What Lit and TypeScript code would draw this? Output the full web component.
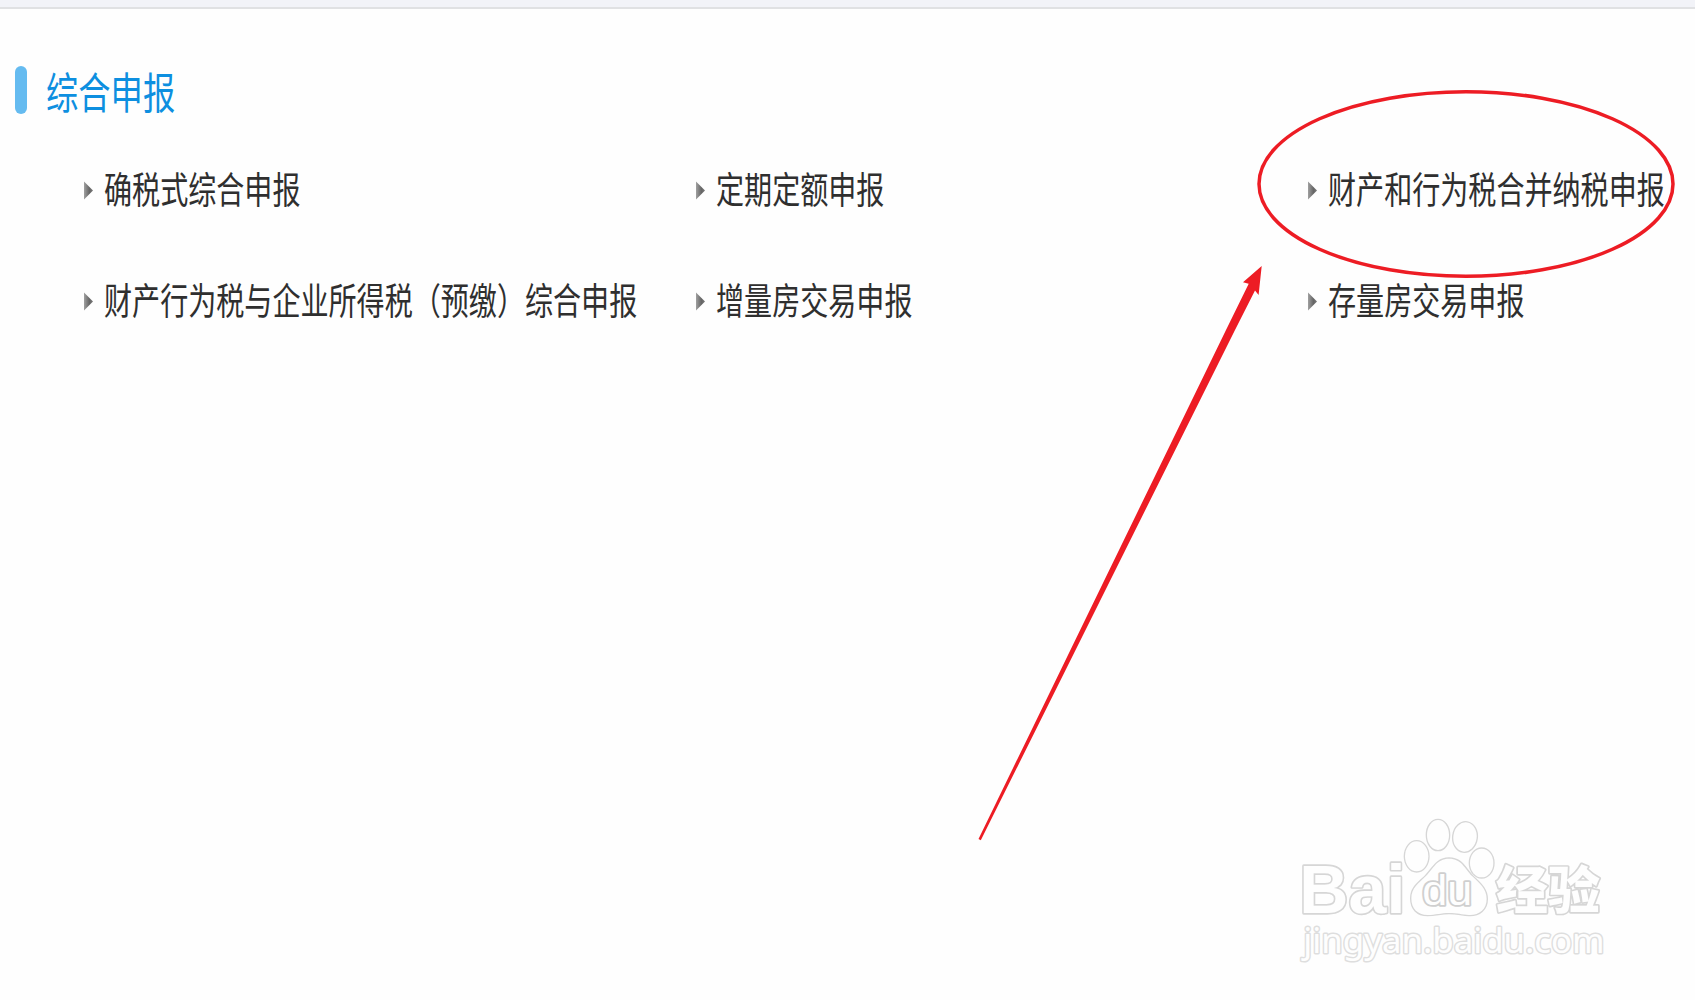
import { LitElement, html, css, svg } from "lit";

interface MenuEntry {
  label: string;
}

const ENTRIES: MenuEntry[] = [
  { label: "确税式综合申报" },
  { label: "定期定额申报" },
  { label: "财产和行为税合并纳税申报" },
  { label: "财产行为税与企业所得税（预缴）综合申报" },
  { label: "增量房交易申报" },
  { label: "存量房交易申报" },
];

export class MenuItem extends LitElement {
  static styles = css`
    :host {
      display: flex;
      align-items: center;
      height: 111px;
      min-width: 0;
    }

    .caret {
      flex: none;
      width: 9px;
      height: 19px;
      margin-right: 11px;
    }

    .label {
      flex: none;
      padding-bottom: 5px;
      font-size: 37px;
      line-height: 56px;
      white-space: nowrap;
      color: #2f2f2f;
      transform: scaleX(0.7585);
      transform-origin: left center;
    }
  `;

  label = "";

  static properties = {
    label: { type: String },
  };

  protected render() {
    return html`
      <svg class="caret" viewBox="0 0 9 19">
        <defs>
          <linearGradient id="shade">
            <stop offset="0" stop-color="#a0a0a0" />
            <stop offset="0.6" stop-color="#666" />
            <stop offset="1" stop-color="#777" />
          </linearGradient>
        </defs>
        <path d="M0 0.5 L9 9.5 L0 18.5 Z" fill="url(#shade)" />
      </svg>
      <span class="label">${this.label}</span>
    `;
  }
}

customElements.define("menu-item", MenuItem);

export class SiteWatermark extends LitElement {
  static styles = css`
    :host {
      display: block;
    }

    svg {
      display: block;
      width: 340px;
      height: 180px;
    }

    .outline {
      fill: #fefefe;
      stroke: #d6d6d6;
      stroke-width: 10px;
      stroke-linejoin: round;
      paint-order: stroke;
    }

    .pad {
      stroke-width: 8px;
    }

    .brand {
      font: bold 208px "Liberation Sans", Arial, sans-serif;
    }

    .inner {
      font: 128px "Liberation Sans", Arial, sans-serif;
      stroke: #cfcfcf;
      stroke-width: 11px;
    }

    .name {
      font: 900 154px "Noto Sans CJK SC", sans-serif;
    }

    .site {
      font: 104px "Noto Sans", "Open Sans", sans-serif;
      stroke: #dedede;
      stroke-width: 9px;
    }
  `;

  private renderPaw() {
    return svg`
      <ellipse class="outline pad" cx="410" cy="169" rx="35" ry="45" />
      <ellipse class="outline pad" cx="474" cy="105" rx="33" ry="45" />
      <ellipse class="outline pad" cx="555" cy="111" rx="35" ry="44" transform="rotate(8 555 111)" />
      <ellipse class="outline pad" cx="605" cy="189" rx="35" ry="43" />
      <path
        class="outline pad"
        d="M507 176 C545 176 553 205 577 229 C598 250 620 266 620 297 C620 328 598 346 567 345 C545 344 532 339 507 339 C482 339 468 345 443 345 C412 345 394 326 394 295 C394 264 416 250 437 229 C461 205 470 176 507 176 Z"
      />
    `;
  }

  protected render() {
    return html`
      <svg viewBox="0 0 1020 540">
        <text class="outline brand" x="58" y="338" textLength="318" lengthAdjust="spacingAndGlyphs">Bai</text>
        ${this.renderPaw()}
        <text class="outline inner" x="427" y="316" textLength="150" lengthAdjust="spacingAndGlyphs">du</text>
        <text class="outline name" x="648" y="326" textLength="312" lengthAdjust="spacingAndGlyphs">经验</text>
        <text class="outline site" x="70" y="460" textLength="904" lengthAdjust="spacingAndGlyphs">jingyan.baidu.com</text>
      </svg>
    `;
  }
}

customElements.define("site-watermark", SiteWatermark);

export class AppRoot extends LitElement {
  static styles = css`
    :host {
      display: block;
      position: relative;
      box-sizing: border-box;
      width: 1695px;
      height: 1000px;
      overflow: hidden;
      background: #fefefe;
      font-family: "Noto Sans CJK SC", sans-serif;
    }

    .top-strip {
      box-sizing: border-box;
      height: 9px;
      background: #f2f3f8;
      border-bottom: 2px solid #e0e1e3;
    }

    .heading {
      display: flex;
      align-items: center;
      height: 48px;
      margin: 57px 0 0 15px;
    }

    .marker {
      width: 12px;
      height: 48px;
      margin-right: 19px;
      border-radius: 6px;
      background: #65bbf0;
    }

    .title {
      margin: 0;
      font-size: 43px;
      font-weight: 400;
      line-height: 60px;
      white-space: nowrap;
      color: #0d8fe0;
      transform: scaleX(0.751);
      transform-origin: left center;
    }

    .menu {
      display: grid;
      grid-template-columns: repeat(3, 612px);
      margin: 21px 0 0 84px;
    }

    .annotation {
      position: absolute;
      inset: 0;
      width: 1695px;
      height: 1000px;
    }

    .watermark {
      position: absolute;
      left: 1280px;
      top: 800px;
    }
  `;

  protected render() {
    return html`
      <div class="top-strip"></div>
      <div class="heading">
        <span class="marker"></span>
        <h2 class="title">综合申报</h2>
      </div>
      <div class="menu">
        ${ENTRIES.map(
          (entry) => html`<menu-item .label=${entry.label}></menu-item>`
        )}
      </div>
      <site-watermark class="watermark"></site-watermark>
      <svg class="annotation" viewBox="0 0 1695 1000">
        <ellipse
          cx="1466"
          cy="184"
          rx="207"
          ry="92.3"
          fill="none"
          stroke="#ed1c24"
          stroke-width="3.5"
        />
        <path
          d="M1261.7 266 L1243 282.3 L1248.7 283.7 L1226 330 L978.5 839 L980.8 840.3 L1235 330 L1255 290.5 L1258.6 295 Z"
          fill="#ed1c24"
        />
      </svg>
    `;
  }
}

customElements.define("app-root", AppRoot);
